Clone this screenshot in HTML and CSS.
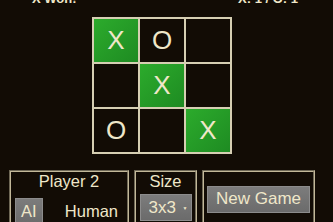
FILE: index.html
```html
<!DOCTYPE html>
<html lang="en">
<head>
    <meta charset="UTF-8">
    <meta name="viewport" content="width=device-width, initial-scale=1.0">
    <title>Tic Tac Toe</title>
    <link rel="stylesheet" href="styles.css">
</head>
<body>
    <div class="app">
        <div class="status">
            <span>X Won!</span>
            <span>X: 1 / O: 1</span>
        </div>

        <div class="board">
            <div class="cell win">X</div>
            <div class="cell">O</div>
            <div class="cell"></div>
            <div class="cell"></div>
            <div class="cell win">X</div>
            <div class="cell"></div>
            <div class="cell">O</div>
            <div class="cell"></div>
            <div class="cell win">X</div>
        </div>

        <div class="controls">
            <div class="panel player-panel">
                <div class="panel-title">Player 2</div>
                <div class="toggle">
                    <button class="toggle-btn active">AI</button>
                    <button class="toggle-btn">Human</button>
                </div>
            </div>
            <div class="panel size-panel">
                <div class="panel-title">Size</div>
                <div class="select-wrap">
                    <select class="size-select">
                        <option>3x3</option>
                        <option>4x4</option>
                        <option>5x5</option>
                    </select>
                </div>
            </div>
            <div class="panel game-panel">
                <button class="new-game">New Game</button>
            </div>
        </div>
    </div>
</body>
</html>
```

FILE: styles.css
```css
body {
    margin: 0;
    background-color: #120c05;
    color: #efe7c9;
    font-family: "Liberation Sans", Arial, sans-serif;
    overflow: hidden;
}
.app {
    width: 324px;
    margin-top: -9px;
}
.status {
    display: flex;
    justify-content: space-between;
    padding: 0 26px 0 32px;
    font-size: 13px;
    font-weight: bold;
    line-height: 15px;
}
.board {
    display: grid;
    grid-template-columns: repeat(3, 44px);
    grid-template-rows: repeat(3, 43px);
    gap: 2px;
    padding: 2px;
    width: 140px;
    box-sizing: border-box;
    margin: 11px auto 0;
    background-color: #d6cfb3;
}
.cell {
    background-color: #120c05;
    display: flex;
    align-items: center;
    justify-content: center;
    font-size: 26px;
    color: #efe7c9;
}
.cell.win {
    background: linear-gradient(135deg, #2cab2c, #1e8b22);
}
.controls {
    display: flex;
    gap: 5px;
    margin: 16px 0 0 9px;
}
.panel {
    height: 58px;
    border: 2px groove #c2b899;
    box-sizing: border-box;
    text-align: center;
}
.player-panel {
    width: 120px;
}
.size-panel {
    width: 63px;
}
.game-panel {
    width: 113px;
    display: flex;
    align-items: center;
    justify-content: center;
}
.panel-title {
    font-size: 16.5px;
    line-height: 19px;
}
.toggle {
    display: flex;
    justify-content: space-between;
    padding: 0 3px 0 4px;
    margin-top: 7px;
}
.toggle-btn {
    font-family: inherit;
    font-size: 16.5px;
    color: #efe7c9;
    background: none;
    border: 1px solid transparent;
    padding: 3px 5px;
    height: 27px;
}
.toggle-btn.active {
    background: linear-gradient(#7c7c7c, #6b6b6b);
    border-color: #8c8c8c;
}
.select-wrap {
    position: relative;
    width: 52px;
    margin: 3px auto 0;
}
.select-wrap::after {
    content: "\25BC";
    position: absolute;
    right: 4px;
    top: 11px;
    font-size: 5px;
    color: #efe7c9;
    pointer-events: none;
}
.size-select {
    appearance: none;
    -webkit-appearance: none;
    width: 52px;
    height: 27px;
    padding: 0 0 0 8px;
    font-family: inherit;
    font-size: 17px;
    color: #efe7c9;
    background: linear-gradient(#7c7c7c, #6b6b6b);
    border: 1px solid #8c8c8c;
    border-radius: 0;
}
.new-game {
    font-family: inherit;
    font-size: 17px;
    color: #efe7c9;
    background: linear-gradient(#7c7c7c, #6b6b6b);
    border: 1px solid #8c8c8c;
    padding: 0 8px;
    height: 27px;
    cursor: pointer;
}
```
